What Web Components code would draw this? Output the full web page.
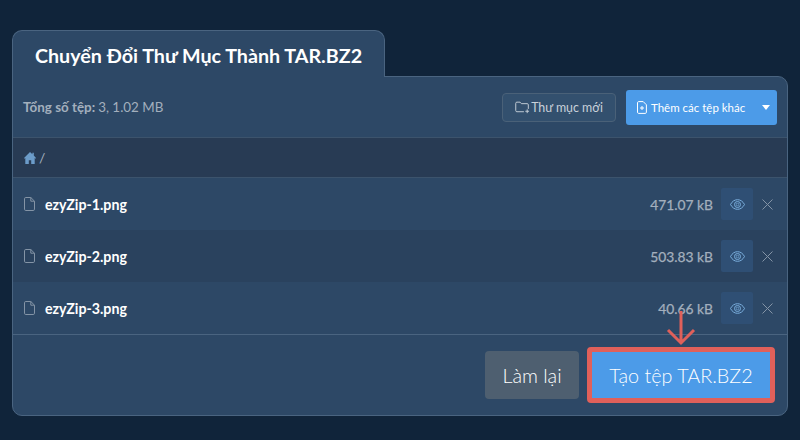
<!DOCTYPE html>
<html lang="vi">
<head>
<meta charset="utf-8">
<title>TAR.BZ2</title>
<style>
  html, body { margin: 0; height: 100%; background: #10243a; }
  body { font-family: Lato, "Noto Sans", sans-serif; padding: 30px 12px 0; box-sizing: border-box; overflow: hidden; }
</style>
</head>
<body>
<convert-panel heading="Chuyển Đổi Thư Mục Thành TAR.BZ2">
  <tool-bar slot="toolbar"></tool-bar>
  <path-bar slot="path"></path-bar>
  <file-row slot="files" name="ezyZip-1.png" size="471.07 kB"></file-row>
  <file-row slot="files" name="ezyZip-2.png" size="503.83 kB" alt></file-row>
  <file-row slot="files" name="ezyZip-3.png" size="40.66 kB"></file-row>
  <action-bar slot="actions"></action-bar>
</convert-panel>

<script>
const panelTemplate = document.createElement('template');
panelTemplate.innerHTML = `
  <style>
    :host { display: block; width: 776px; }
    .tab {
      width: 373px;
      height: 47px;
      box-sizing: border-box;
      background: #2d4866;
      border: 1px solid #4a6480;
      border-bottom: 0;
      border-radius: 10px 10px 0 0;
      color: #fff;
      font-size: 19.7px;
      font-weight: 700;
      text-align: center;
      line-height: 49px;
      position: relative;
      z-index: 1;
    }
    .body {
      height: 340px;
      box-sizing: border-box;
      background: #2d4866;
      border: 1px solid #4a6480;
      border-radius: 0 10px 10px 10px;
      margin-top: -1px;
      display: flex;
      flex-direction: column;
    }
    .files { display: block; }
  </style>
  <div class="tab"></div>
  <div class="body">
    <slot name="toolbar"></slot>
    <slot name="path"></slot>
    <div class="files"><slot name="files"></slot></div>
    <slot name="actions"></slot>
  </div>
`;

class ConvertPanel extends HTMLElement {
  constructor() {
    super();
    this.attachShadow({ mode: 'open' }).appendChild(panelTemplate.content.cloneNode(true));
    this.shadowRoot.querySelector('.tab').textContent = this.getAttribute('heading');
  }
}
customElements.define('convert-panel', ConvertPanel);

const toolbarTemplate = document.createElement('template');
toolbarTemplate.innerHTML = `
  <style>
    :host {
      display: flex;
      align-items: center;
      height: 60px;
      box-sizing: border-box;
      padding: 0 10px 0 10px;
      color: #a3afbd;
      font-size: 13.4px;
    }
    b { font-weight: 700; margin-right: 3px; }
    .total { flex: 1; }
    .folder {
      display: flex; align-items: center; gap: 1px;
      width: 114px; height: 29px; box-sizing: border-box;
      border: 1px solid #4a6178; border-radius: 4px;
      background: #33506e; color: #c9d1da; font-size: 12.4px;
      justify-content: center; margin-right: 10px;
    }
    .add {
      display: flex; align-items: center;
      width: 151px; height: 35px;
      background: #4c9be8; color: #fff; border-radius: 3px;
      font-size: 11.5px; font-weight: 400;
    }
    .add .main { flex: 1; display: flex; align-items: center; gap: 4px; padding-left: 11px; }
    .caret { width: 0; height: 0; border: 4.5px solid transparent; border-top: 5px solid #fff; border-bottom: 0; margin-right: 7px; }
    svg { display: block; }
  </style>
  <div class="total"><b>Tổng số tệp:</b>3, 1.02 MB</div>
  <div class="folder">
    <svg width="15" height="13" viewBox="0 0 16 13" fill="none" stroke="#c9d1da" stroke-width="1"><path d="M9.500 11H2a1.200 1.200 0 0 1-1.200-1.200V2A1.200 1.200 0 0 1 2 .8h3.400l1.400 1.600H13a1.200 1.200 0 0 1 1.200 1.200V8"/><path d="M13 8.500v4M11 10.500h4"/></svg>
    <span>Thư mục mới</span>
  </div>
  <div class="add">
    <div class="main">
      <svg width="10" height="13" viewBox="0 0 10 13" fill="none" stroke="#fff" stroke-width="1"><path d="M1.500.6h4.700l3.200 3.200v7.400a1.200 1.200 0 0 1-1.200 1.200H1.500a1.200 1.200 0 0 1-1-1.200V1.800a1.200 1.200 0 0 1 1-1.200z"/><path d="M5 5v4M3 7h4"/></svg>
      <span>Thêm các tệp khác</span>
    </div>
    <i class="caret"></i>
  </div>
`;
class ToolBar extends HTMLElement {
  constructor() {
    super();
    this.attachShadow({ mode: 'open' }).appendChild(toolbarTemplate.content.cloneNode(true));
  }
}
customElements.define('tool-bar', ToolBar);

const pathTemplate = document.createElement('template');
pathTemplate.innerHTML = `
  <style>
    :host {
      display: flex; align-items: center; gap: 3px;
      height: 41px; box-sizing: border-box;
      padding: 0 10px 0 11px;
      background: #283b54;
      border-top: 1px solid #3c536c;
      border-bottom: 1px solid #3c536c;
      color: #a3afbd; font-size: 14px;
    }
    svg { display: block; }
  </style>
  <svg width="12" height="12" viewBox="0 0 12 11" preserveAspectRatio="none"><path fill="#6c9cc9" d="M6 0 0 5.400l.6.7L1.300 5.500V11h3.500V7.500h2.400V11h3.500V5.500l.7.6.6-.7L9.800 3.300V.7H8.400v1.300z"/></svg>
  <span>/</span>
`;
class PathBar extends HTMLElement {
  constructor() {
    super();
    this.attachShadow({ mode: 'open' }).appendChild(pathTemplate.content.cloneNode(true));
  }
}
customElements.define('path-bar', PathBar);

const rowTemplate = document.createElement('template');
rowTemplate.innerHTML = `
  <style>
    :host {
      display: flex; align-items: center;
      height: 52px; box-sizing: border-box;
      padding: 0 14px 0 11px;
      background: #2d4866;
      color: #fff;
    }
    :host([alt]) { background: #2a425e; }
    .name { flex: 1; font-weight: 700; font-size: 14.2px; margin-left: 10px; }
    .size { color: #a3afbd; font-size: 13.8px; -webkit-text-stroke: .25px #a3afbd; margin-right: 8px; }
    .eye {
      width: 32px; height: 32px; border-radius: 2px; background: #2f4f74;
      display: flex; align-items: center; justify-content: center;
    }
    .x { margin-left: 9px; }
    svg { display: block; }
  </style>
  <svg width="11" height="14" viewBox="0 0 11 14" fill="none" stroke="#8494a6" stroke-width="1"><path d="M1.800.5h5l3.700 3.700v8a1.300 1.300 0 0 1-1.300 1.300H1.800A1.300 1.300 0 0 1 .5 12.200V1.800A1.300 1.300 0 0 1 1.800.5zM6.800.5v3.700h3.700"/></svg>
  <div class="name"></div>
  <div class="size"></div>
  <div class="eye">
    <svg width="15" height="11" viewBox="0 0 15 11" fill="none" stroke="#7aaedd" stroke-width="1"><path d="M.5 5.500C2.200 2.300 4.600.7 7.500.7s5.300 1.600 7 4.800c-1.700 3.200-4.100 4.800-7 4.800s-5.300-1.600-7-4.800z"/><circle cx="7.500" cy="5.500" r="3"/><circle cx="7.500" cy="5.500" r="1.300" stroke-width=".7"/></svg>
  </div>
  <svg class="x" width="11" height="11" viewBox="0 0 11 11" stroke="#8494a6" stroke-width="1"><path d="M.5.500l10 10M10.500.500l-10 10"/></svg>
`;
class FileRow extends HTMLElement {
  constructor() {
    super();
    this.attachShadow({ mode: 'open' }).appendChild(rowTemplate.content.cloneNode(true));
    this.shadowRoot.querySelector('.name').textContent = this.getAttribute('name');
    this.shadowRoot.querySelector('.size').textContent = this.getAttribute('size');
  }
}
customElements.define('file-row', FileRow);

const actionsTemplate = document.createElement('template');
actionsTemplate.innerHTML = `
  <style>
    :host {
      display: flex; align-items: center; justify-content: flex-end; gap: 8px;
      flex: 1; box-sizing: border-box;
      border-top: 1px solid #4a6480;
      padding: 0 12px 0 0;
      position: relative;
      font-size: 19.8px; font-weight: 300; color: #fff;
    }
    .reset {
      width: 94px; height: 48px; border-radius: 4px; background: #4e5f70;
      display: flex; align-items: center; justify-content: center;
    }
    .create {
      width: 188px; height: 56px; box-sizing: border-box;
      border: 5px solid #e0605a; border-radius: 4px; background: #4c9be8;
      display: flex; align-items: center; justify-content: center;
    }
    .arrow { position: absolute; left: 653px; top: -25px; display: block; }
  </style>
  <div class="reset">Làm lại</div>
  <div class="create">Tạo tệp TAR.BZ2</div>
  <svg class="arrow" width="30" height="36" viewBox="0 0 30 36" fill="none" stroke="#e0605a" stroke-width="3"><path d="M15 1v32M2 20l13 13 13-13"/></svg>
`;
class ActionBar extends HTMLElement {
  constructor() {
    super();
    this.attachShadow({ mode: 'open' }).appendChild(actionsTemplate.content.cloneNode(true));
  }
}
customElements.define('action-bar', ActionBar);
</script>
</body>
</html>
